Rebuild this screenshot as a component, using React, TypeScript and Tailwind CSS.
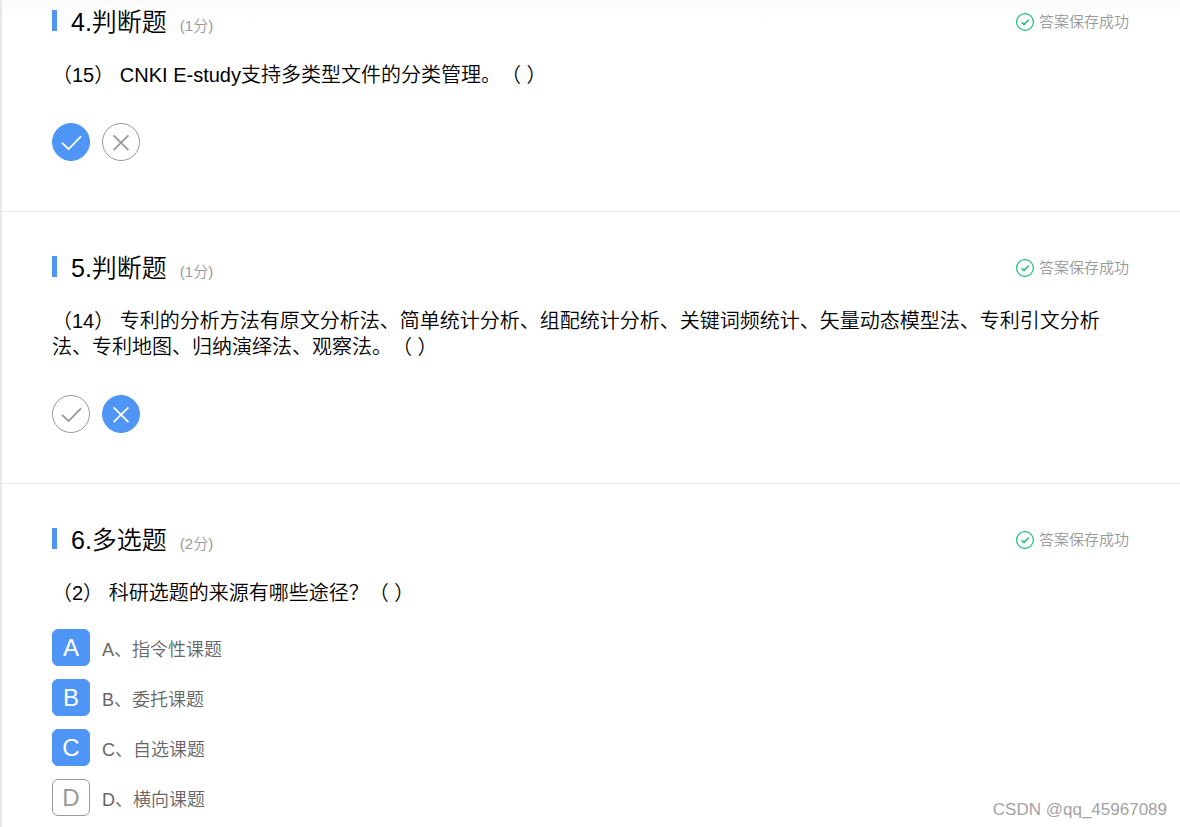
import { useState } from 'react';
import clsx from 'clsx';

type Kind = 'judge' | 'multiple';

interface Question {
  id: number;
  kind: Kind;
  title: string;
  score: string;
  text: string;
  options: { key: string; label: string }[];
}

const judgeOptions = [
  { key: 'yes', label: '正确' },
  { key: 'no', label: '错误' },
];

const questions: Question[] = [
  {
    id: 4,
    kind: 'judge',
    title: '4.判断题',
    score: '(1分)',
    text: '（15） CNKI E-study支持多类型文件的分类管理。（ ）',
    options: judgeOptions,
  },
  {
    id: 5,
    kind: 'judge',
    title: '5.判断题',
    score: '(1分)',
    text: '（14） 专利的分析方法有原文分析法、简单统计分析、组配统计分析、关键词频统计、矢量动态模型法、专利引文分析法、专利地图、归纳演绎法、观察法。（ ）',
    options: judgeOptions,
  },
  {
    id: 6,
    kind: 'multiple',
    title: '6.多选题',
    score: '(2分)',
    text: '（2） 科研选题的来源有哪些途径？（ ）',
    options: [
      { key: 'A', label: '指令性课题' },
      { key: 'B', label: '委托课题' },
      { key: 'C', label: '自选课题' },
      { key: 'D', label: '横向课题' },
    ],
  },
];

const initialAnswers: Record<number, string[]> = {
  4: ['yes'],
  5: ['no'],
  6: ['A', 'B', 'C'],
};

function SavedStatus() {
  return (
    <div className="flex shrink-0 items-center gap-[5px] text-[15px] text-[#999]">
      <svg className="size-[18px]" viewBox="0 0 18 18" fill="none" stroke="#1abc7b">
        <circle cx="9" cy="9" r="8.4" strokeWidth="1.2" />
        <path d="M5.6 9.2 8 11.6 12.7 6.8" strokeWidth="1.5" />
      </svg>
      <span>答案保存成功</span>
    </div>
  );
}

function JudgeIcon({ type }: { type: string }) {
  return (
    <svg className="size-9" viewBox="0 0 36 36" fill="none" stroke="currentColor" strokeWidth="1.75">
      {type === 'yes' ? (
        <path d="M9 18.8 15.6 25 28 12.3" />
      ) : (
        <path d="M10.6 11.3 25.4 26.1M25.4 11.3 10.6 26.1" />
      )}
    </svg>
  );
}

export default function App() {
  const [answers, setAnswers] = useState(initialAnswers);

  function handleJudge(id: number, key: string) {
    setAnswers((prev) => ({ ...prev, [id]: [key] }));
  }

  function handleToggle(id: number, key: string) {
    setAnswers((prev) => ({
      ...prev,
      [id]: prev[id].includes(key) ? prev[id].filter((k) => k !== key) : [...prev[id], key],
    }));
  }

  return (
    <main className="relative min-h-screen border-l-2 border-[#e8e8e8] bg-white bg-linear-to-b from-[#fafafa] to-white to-[20px] font-['Liberation_Sans','Noto_Sans_CJK_SC',sans-serif] font-[350] text-black [text-spacing-trim:space-all]">
      {questions.map((q) => (
        <section
          key={q.id}
          className="border-b border-[#ebebeb] pr-[51px] pl-[50px] pt-10 pb-[50px] first:pt-[6px] last-of-type:border-b-0 last-of-type:pb-[11px]"
        >
          <header className="flex h-8 items-center justify-between">
            <div className="flex items-start">
              <span className="mt-1 mr-[14px] h-[21px] w-[5px] bg-[#4f95f5]" />
              <div className="flex items-baseline gap-[13px]">
                <h2 className="text-[25px] leading-8">{q.title}</h2>
                <span className="text-[15px] text-[#999]">{q.score}</span>
              </div>
            </div>
            <SavedStatus />
          </header>

          <p className="mt-6 text-[20px] leading-[26px]">{q.text}</p>

          {q.kind === 'judge' ? (
            <div className="mt-[35px] flex gap-3">
              {q.options.map((o) => (
                <button
                  key={o.key}
                  type="button"
                  aria-label={o.label}
                  aria-pressed={answers[q.id].includes(o.key)}
                  onClick={() => handleJudge(q.id, o.key)}
                  className={clsx(
                    'size-[38px] rounded-full border',
                    answers[q.id].includes(o.key)
                      ? 'border-[#4f95f5] bg-[#4f95f5] text-white'
                      : 'border-[#999] bg-white text-[#999]'
                  )}
                >
                  <JudgeIcon type={o.key} />
                </button>
              ))}
            </div>
          ) : (
            <div className="mt-[23px] flex flex-col items-start gap-[13px]">
              {q.options.map((o) => (
                <label key={o.key} className="relative flex h-[37px] items-center gap-3">
                  <input
                    type="checkbox"
                    className="peer sr-only"
                    checked={answers[q.id].includes(o.key)}
                    onChange={() => handleToggle(q.id, o.key)}
                  />
                  <span className="flex h-[37px] w-[38px] items-center justify-center rounded-md border border-[#999] text-[24px] leading-8 text-[#999] peer-checked:border-[#4f95f5] peer-checked:bg-[#4f95f5] peer-checked:text-white">
                    {o.key}
                  </span>
                  <span className="pt-1 text-[18px] leading-7 text-[#666]">
                    {o.key}、{o.label}
                  </span>
                </label>
              ))}
            </div>
          )}
        </section>
      ))}

      <div className="absolute right-[13px] bottom-[5px] text-[17px] leading-6 text-[#a3a3a3]">
        CSDN @qq_45967089
      </div>
    </main>
  );
}
